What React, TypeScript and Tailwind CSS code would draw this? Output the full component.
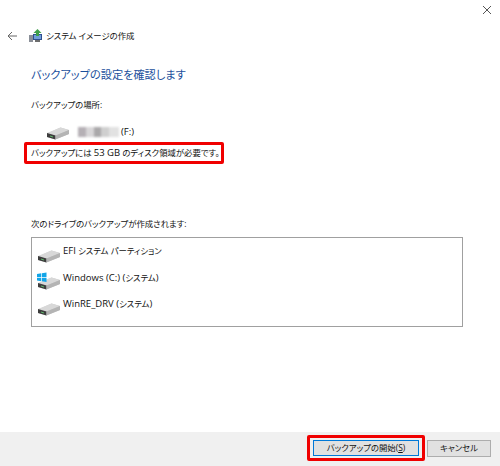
import React from 'react';

const DriveIcon = ({ windows = false }: { windows?: boolean }) => (
  <svg width="24" height="20" viewBox="0 0 24 20" className="shrink-0">
    <path d="M1 11.5 L14.5 5.5 L23 8 L23 12 L9 17.5 L1 15 Z" fill="#c9c9c9" />
    <path d="M1 11 L14.5 5.5 L23 8 L9.5 13.5 Z" fill="#d8d8d8" />
    <path d="M1 11 L9.5 13.5 L9.5 17.5 L1 15 Z" fill="#3d3d3d" />
    <path d="M9.5 13.5 L23 8 L23 12 L9.5 17.5 Z" fill="#b4b4b4" />
    <path d="M4 14 L7 15" stroke="#5fb56a" strokeWidth="1" />
    {windows && (
      <g fill="#12a5e8">
        <path d="M0 2 L4.3 1.3 L4.3 5 L0 5 Z" />
        <path d="M5 1.2 L9.5 0.5 L9.5 5 L5 5 Z" />
        <path d="M0 5.7 L4.3 5.7 L4.3 9.2 L0 8.6 Z" />
        <path d="M5 5.7 L9.5 5.7 L9.5 10 L5 9.3 Z" />
      </g>
    )}
  </svg>
);

const BackupIcon = () => (
  <svg width="16" height="16" viewBox="0 0 16 16" className="shrink-0">
    <rect x="1" y="7" width="4" height="7" fill="#8a8f98" />
    <rect x="5" y="6" width="9" height="6" fill="#2f4f8f" />
    <rect x="6" y="7" width="7" height="4" fill="#6f9fd8" />
    <rect x="7" y="12" width="5" height="2" fill="#6d6d6d" />
    <path d="M9.5 1 L13.5 5 L11 5 L11 8 L8 8 L8 5 L5.5 5 Z" fill="#3f9f4a" />
  </svg>
);

const DriveRow = ({ children, windows }: { children: React.ReactNode; windows?: boolean }) => (
  <div className="flex h-[26.5px] items-start">
    <DriveIcon windows={windows} />
    <span className="ml-[2px] mt-[-1px] leading-[14px]">{children}</span>
  </div>
);

const Latin = ({ children }: { children: React.ReactNode }) => <span className="text-[9.5px]">{children}</span>;

export default function App() {
  return (
    <div className="w-[500px] h-[466px] flex flex-col bg-white text-[8.4px] text-[#111] [font-feature-settings:'palt'] font-['Open_Sans','Noto_Sans_CJK_JP',sans-serif] overflow-hidden">
      <div className="flex justify-end h-[27px] pt-[5px] pr-[8px]">
        <svg width="10" height="10" viewBox="0 0 10 10">
          <path d="M1 1 L9 9 M9 1 L1 9" stroke="#555" strokeWidth="1" />
        </svg>
      </div>

      <div className="flex items-center h-[18px] pl-[7px]">
        <svg width="11" height="10" viewBox="0 0 11 10">
          <path d="M5 1 L1 5 L5 9 M1 5 L10 5" stroke="#666" strokeWidth="1" fill="none" />
        </svg>
        <div className="ml-[10px]">
          <BackupIcon />
        </div>
        <span className="ml-[2px]">システム イメージの作成</span>
      </div>

      <div className="flex flex-col flex-1 pl-[31px] pr-[37px]">
        <h1 className="mt-[21px] text-[11.2px] leading-[18px] font-normal text-[#1b4f9c]">バックアップの設定を確認します</h1>
        <p className="mt-[14px] leading-[14px]">バックアップの場所:</p>

        <div className="flex items-center mt-[10px] ml-[15px] h-[20px]">
          <DriveIcon />
          <div className="ml-[8px] flex h-[10px] w-[41px] blur-[1px]">
            <div className="w-[8px] bg-[#b5b0b5]" />
            <div className="w-[8px] bg-[#d8d6d8]" />
            <div className="w-[7px] bg-[#aaa8aa]" />
            <div className="w-[8px] bg-[#cfcfcf]" />
            <div className="w-[10px] bg-[#e2e2e2]" />
          </div>
          <span className="ml-[2px]"><Latin>(F:)</Latin></span>
        </div>

        <div className="ml-[-7px] w-[200px] h-[22px] flex items-center pl-[4px] border-[3px] border-[#f00000] rounded-[2px] whitespace-nowrap">
          <span>バックアップには <Latin>53 GB</Latin> のディスク領域が必要です。</span>
        </div>

        <p className="mt-[53px] leading-[14px]">次のドライブのバックアップが作成されます:</p>

        <div className="mt-[6px] h-[90px] border border-[#a0a0a0] pl-[5px] pt-[7px]">
          <DriveRow><Latin>EFI</Latin> システム パーティション</DriveRow>
          <DriveRow windows><Latin>Windows (C:) (</Latin>システム<Latin>)</Latin></DriveRow>
          <DriveRow><Latin>WinRE_DRV (</Latin>システム<Latin>)</Latin></DriveRow>
        </div>
      </div>

      <div className="h-[34px] bg-[#f0f0f0] flex items-start pt-[3px] justify-end pr-[9px]">
        <div className="border-[3px] border-[#f00000] rounded-[2px] w-[118px] h-[26px] flex items-center justify-center">
          <button className="w-[106px] h-[16px] bg-[#e1e1e1] border-[1px] border-[#0078d7] flex items-center justify-center leading-none">
            <span>バックアップの開始(<span className="underline">S</span>)</span>
          </button>
        </div>
        <button className="ml-[2px] mt-[5px] w-[64px] h-[17px] bg-[#e1e1e1] border border-[#adadad] flex items-center justify-center leading-none">
          キャンセル
        </button>
      </div>
    </div>
  );
}
